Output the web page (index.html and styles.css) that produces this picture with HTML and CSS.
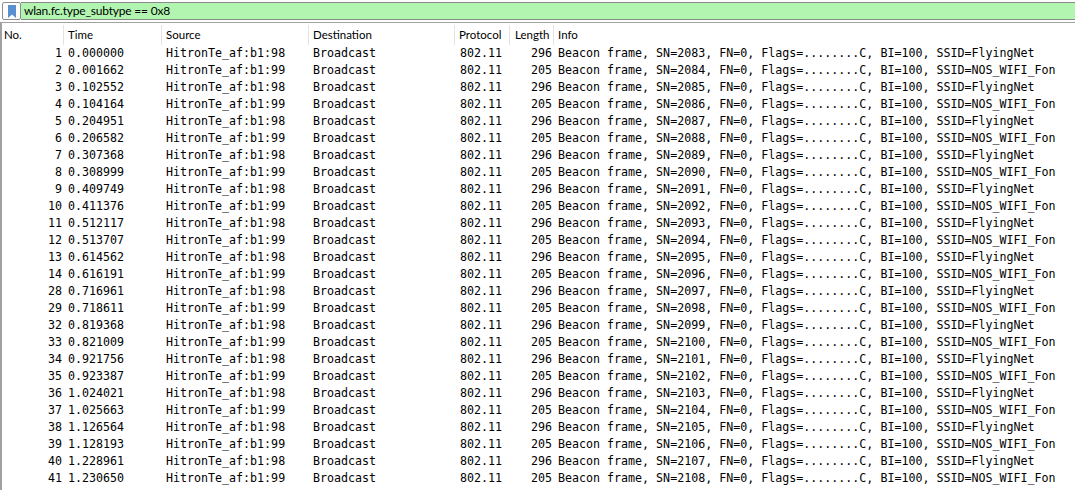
FILE: index.html
```html
<!DOCTYPE html>
<html>
<head>
<meta charset="utf-8">
<link rel="stylesheet" href="styles.css">
</head>
<body>
<div class="filterbar">
  <div class="bm">
    <svg width="8" height="13" viewBox="0 0 8 13"><path d="M0 0H8V13L4 9.5L0 13Z" fill="#5a8fd2"/></svg>
  </div>
  <div class="filter">wlan.fc.type_subtype == 0x8</div>
</div>
<div class="list">
  <div class="head">
    <div class="hc">No.</div>
    <div class="hc">Time</div>
    <div class="hc">Source</div>
    <div class="hc">Destination</div>
    <div class="hc">Protocol</div>
    <div class="hc len">Length</div>
    <div class="hc last">Info</div>
  </div>
  <div id="rows"></div>
</div>
<script src="app.js"></script>
</body>
</html>
```

FILE: app.js
```js
var data = [
  [1,"0.000000",98,2083],[2,"0.001662",99,2084],[3,"0.102552",98,2085],[4,"0.104164",99,2086],
  [5,"0.204951",98,2087],[6,"0.206582",99,2088],[7,"0.307368",98,2089],[8,"0.308999",99,2090],
  [9,"0.409749",98,2091],[10,"0.411376",99,2092],[11,"0.512117",98,2093],[12,"0.513707",99,2094],
  [13,"0.614562",98,2095],[14,"0.616191",99,2096],[28,"0.716961",98,2097],[29,"0.718611",99,2098],
  [32,"0.819368",98,2099],[33,"0.821009",99,2100],[34,"0.921756",98,2101],[35,"0.923387",99,2102],
  [36,"1.024021",98,2103],[37,"1.025663",99,2104],[38,"1.126564",98,2105],[39,"1.128193",99,2106],
  [40,"1.228961",98,2107],[41,"1.230650",99,2108]
];
var html = "";
data.forEach(function (d) {
  var a = d[2] === 98;
  html += '<div class="row">' +
    '<div class="c no">' + d[0] + '</div>' +
    '<div class="c">' + d[1] + '</div>' +
    '<div class="c">HitronTe_af:b1:' + d[2] + '</div>' +
    '<div class="c">Broadcast</div>' +
    '<div class="c proto">802.11</div>' +
    '<div class="c len">' + (a ? 296 : 205) + '</div>' +
    '<div class="c info">Beacon frame, SN=' + d[3] + ', FN=0, Flags=........C, BI=100, SSID=' + (a ? 'FlyingNet' : 'NOS_WIFI_Fon') + '</div>' +
    '</div>';
});
document.getElementById("rows").innerHTML = html;
```

FILE: styles.css
```css
html, body {
  margin: 0;
  padding: 0;
  background: #ffffff;
  overflow: hidden;
}
.filterbar {
  display: flex;
  padding-top: 2px;
  height: 18px;
  margin-bottom: 2px;
}
.bm {
  margin-left: 2px;
  border: 1px solid #8d8d8d;
  border-radius: 2px;
  background: #fdfdfd;
  display: flex;
  align-items: center;
  justify-content: center;
  box-sizing: border-box;
  width: 19px;
  height: 18px;
}
.bm svg { display: block; margin-top: 1px; }
.filter {
  flex: 1;
  background: #b1f5b1;
  border-top: 1px solid #8a8a8a;
  border-bottom: 1px solid #8a8a8a;
  box-sizing: border-box;
  height: 18px;
  font-family: Lato, sans-serif;
  font-size: 12px;
  letter-spacing: -0.2px;
  line-height: 16px;
  padding-left: 3px;
  color: #000;
}
.list {
  border-top: 1px solid #a0a0a0;
  border-left: 2px solid #a0a0a0;
  height: 470px;
}
.head, .row {
  display: grid;
  grid-template-columns: 62px 98px 147px 146px 55px 44px 1fr;
}
.head {
  height: 22px;
  font-family: Lato, sans-serif;
  font-size: 11.5px;
  color: #000;
}
.hc {
  padding-left: 4px;
  border-right: 1px solid #e3e3e3;
  margin-top: 2px;
  line-height: 20px;
  white-space: nowrap;
  overflow: hidden;
}
.hc:first-child { padding-left: 2px; }
.hc.len { padding-left: 5px; }
.hc.last { border-right: none; }
.row {
  height: 17px;
  font-family: "DejaVu Sans Mono", monospace;
  font-size: 11.65px;
  line-height: 17px;
  color: #000;
}
.c {
  padding-left: 4px;
  white-space: nowrap;
  overflow: hidden;
}
.c.no { text-align: right; padding-left: 0; padding-right: 2px; }
.c.proto { padding-left: 5px; }
.c.len { text-align: right; padding-left: 0; padding-right: 2px; }
.c.info { overflow: visible; }
```
